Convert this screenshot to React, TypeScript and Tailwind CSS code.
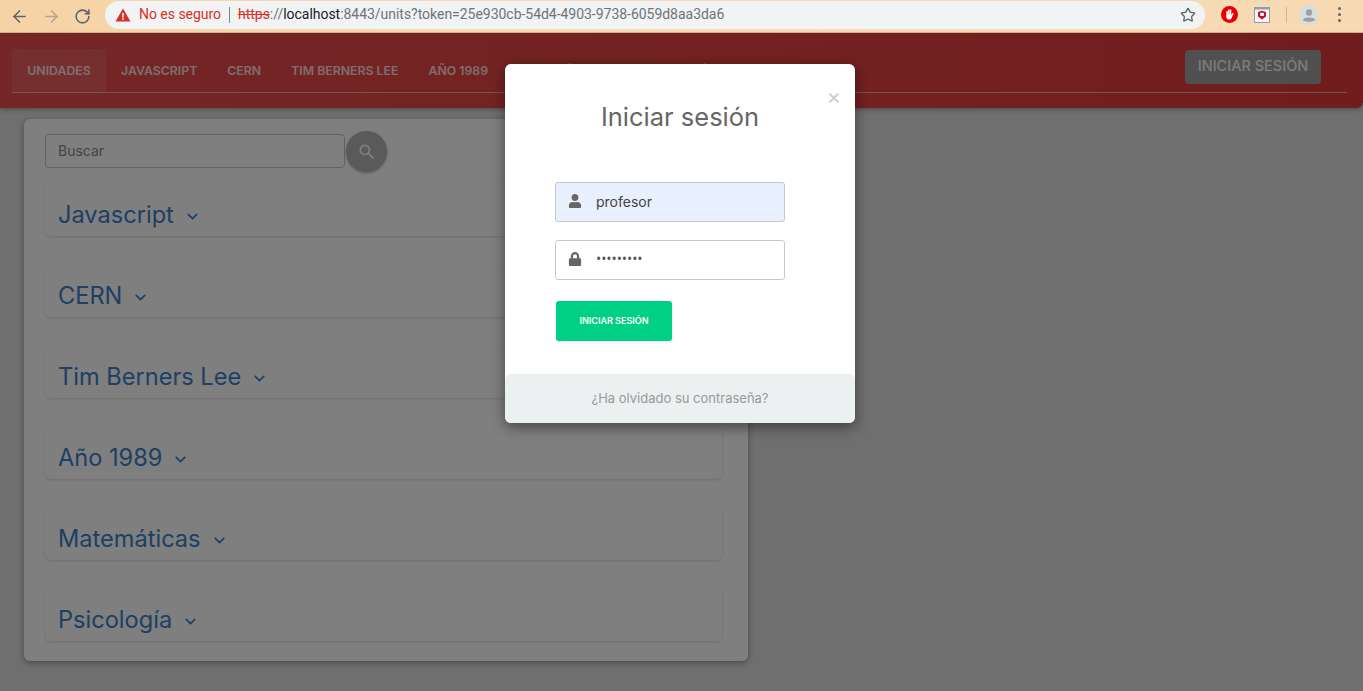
import { ArrowLeft, ArrowRight, RotateCw, Star, ChevronDown } from "lucide-react";
import { FaUser, FaLock } from "react-icons/fa";

const navItems = ["JAVASCRIPT", "CERN", "TIM BERNERS LEE", "AÑO 1989", "MATEMÁTICAS", "PSICOLOGÍA"];
const units = ["Javascript", "CERN", "Tim Berners Lee", "Año 1989", "Matemáticas", "Psicología"];
const ui = "font-['Inter',sans-serif]";

function BrowserBar() {
  return (
    <div className="h-[33px] flex items-center bg-gradient-to-r from-[#f6d3a6] via-[#f9ddb9] to-[#f7d9b2] border-b border-[#d9b48a] font-['Roboto',sans-serif]">
      <div className="w-[105px] flex items-center pl-[10px] gap-[13px] shrink-0">
        <ArrowLeft size={19} strokeWidth={2} className="text-[#5f6368]" />
        <ArrowRight size={19} strokeWidth={2} className="text-[#b3a391]" />
        <RotateCw size={17} strokeWidth={2.2} className="text-[#5f6368]" />
      </div>
      <div className="w-[1100px] h-[28px] rounded-full bg-[#f1f3f4] flex items-center pl-[10px] pr-[9px] text-[14px] tracking-[-0.03px] shrink-0 mb-[3px]">
        <svg width="16" height="14" viewBox="0 0 16 14" className="shrink-0">
          <path d="M8 0.5 15.5 13.5H0.5Z" fill="#d93025" />
          <rect x="7.2" y="5" width="1.6" height="4.5" fill="#fff" />
          <rect x="7.2" y="10.3" width="1.6" height="1.6" fill="#fff" />
        </svg>
        <span className="ml-[8px] text-[#d93025]">No es seguro</span>
        <span className="mx-[8px] w-px h-[16px] bg-[#80868b]" />
        <span className="text-[#d93025] line-through">https</span>
        <span className="text-[#6f7377]">://</span>
        <span className="text-[#202124]">localhost</span>
        <span className="text-[#6f7377]">:8443/units?token=25e930cb-54d4-4903-9738-6059d8aa3da6</span>
        <Star size={16} strokeWidth={2} className="ml-auto text-[#5f6368]" />
      </div>
      <div className="flex-1 flex items-center pl-[16px] mb-[3px]">
        <svg width="17" height="17" viewBox="0 0 17 17" className="shrink-0">
          <circle cx="8.5" cy="8.5" r="8.5" fill="#e60000" />
          <rect x="5.4" y="5" width="1.5" height="6" rx="0.7" fill="#fff" />
          <rect x="7.1" y="3.2" width="1.5" height="7" rx="0.7" fill="#fff" />
          <rect x="8.8" y="3.6" width="1.5" height="7" rx="0.7" fill="#fff" />
          <path d="M5.400 8.500H10.300L11.700 7.100C12.300 6.700 12.900 7.200 12.500 7.800L10.500 12.200C10.100 13 9.500 13.500 8.700 13.500H7.500C6.300 13.500 5.400 12.500 5.400 11.300Z" fill="#fff" />
        </svg>
        <svg width="16" height="16" viewBox="0 0 16 16" className="ml-[16px] shrink-0">
          <rect x="0.500" y="0.500" width="15" height="15" fill="#f5f5f5" stroke="#8fa0ab" />
          <rect x="0" y="0" width="16" height="2.500" fill="#8fa0ab" />
          <path d="M4 5 8 3.800 12 5V9.500L8 12.500 4 9.500Z" fill="#c8102e" />
          <rect x="6.200" y="5.800" width="3.600" height="3.200" fill="#fff" />
        </svg>
        <span className="ml-[16px] w-px h-[16px] bg-[#c9b9a3]" />
        <svg width="20" height="20" viewBox="0 0 20 20" className="ml-[12px] shrink-0">
          <circle cx="10" cy="10" r="10" fill="#dcdcdc" />
          <circle cx="10" cy="7.500" r="3.200" fill="#9aa0a6" />
          <path d="M3.800 15C5 11.800 15 11.800 16.200 15 13.500 17.300 6.500 17.300 3.800 15Z" fill="#9aa0a6" />
        </svg>
        <span className="ml-[19px] flex flex-col gap-[3px]">
          <span className="w-[3px] h-[3px] rounded-full bg-[#5f6368]" />
          <span className="w-[3px] h-[3px] rounded-full bg-[#5f6368]" />
          <span className="w-[3px] h-[3px] rounded-full bg-[#5f6368]" />
        </span>
      </div>
    </div>
  );
}

function NavBar() {
  return (
    <div className="h-[75px] bg-gradient-to-r from-[#ea4c4c] to-[#e43a3a] rounded-br-[6px] px-[12px] pt-[16px] shadow-[0_2px_4px_rgba(0,0,0,0.25)] relative">
      <div className="h-[44px] mr-[4px] border-b border-[#f0f0f0]/60 flex justify-between">
        <div className="flex">
          <div className="h-[43px] w-[94px] flex items-center justify-center pt-[1px] bg-white/10 rounded-t-[3px] text-[12.3px] font-semibold text-white/80">UNIDADES</div>
          {navItems.map((n) => (
            <div key={n} className="h-[43px] flex items-center pt-[1px] px-[15px] text-[12.3px] font-semibold text-white/80">{n}</div>
          ))}
        </div>
        <div className="h-[34px] w-[136px] mr-[26px] mt-[1px] pb-[3px] rounded-[4px] bg-[#a0a0a0] flex items-center justify-center text-[14.5px] font-medium text-[#f6f6f6]">INICIAR SESIÓN</div>
      </div>
    </div>
  );
}

function UnitCard() {
  return (
    <div className="w-[724px] h-[542px] ml-[24px] mt-[11px] rounded-[6px] bg-white shadow-[0_2px_6px_rgba(0,0,0,0.35)] pl-[21px] pr-[26px] pt-[15px]">
      <div className="flex items-center h-[34px]">
        <div className="w-[300px] h-[34px] rounded-[4px] border border-[#c4c4c4] flex items-center pl-[12px] pb-[2px] text-[14px] text-[#888]">Buscar</div>
        <div className="w-[41px] h-[41px] ml-px mt-[1px] rounded-full bg-[#b4b4b4] flex items-center justify-center shadow-[0_1px_3px_rgba(0,0,0,0.3)]">
          <svg width="20" height="20" viewBox="0 0 24 24" fill="#fff">
            <path d="M15.500 14h-.790l-.280-.270A6.470 6.470 0 0 0 16 9.500 6.500 6.500 0 1 0 9.500 16c1.610 0 3.090-.590 4.230-1.570l.270.280v.790l5 4.990L20.490 19l-4.990-5zm-6 0C7.010 14 5 11.990 5 9.500S7.010 5 9.500 5 14 7.010 14 9.500 11.990 14 9.500 14z" />
          </svg>
        </div>
      </div>
      <div className="mt-[16px] flex flex-col gap-[29px]">
        {units.map((u) => (
          <div key={u} className="h-[52px] rounded-[6px] bg-[#fefefe] shadow-[0_1px_3px_rgba(0,0,0,0.14)] flex items-center pl-[13px] pt-[10px]">
            <span className="text-[23.6px] leading-none text-[#3a80c8]">{u}</span>
            <ChevronDown size={17} strokeWidth={2.4} className="ml-[10px] mt-[3px] text-[#3a80c8]" />
          </div>
        ))}
      </div>
    </div>
  );
}

function LoginModal() {
  return (
    <div className="absolute left-[505px] top-[31px] w-[350px] h-[359px] rounded-[6px] bg-white shadow-[0_4px_14px_rgba(0,0,0,0.45)] flex flex-col">
      <div className="relative h-[118px] flex justify-center pt-[35px]">
        <span className="text-[25.5px] leading-[36px] text-[#666]">Iniciar sesión</span>
        <span className="absolute right-[14px] top-[19px] text-[22px] leading-[26px] text-[#ccc]">×</span>
      </div>
      <div className="pl-[50px] flex flex-col flex-1">
        <div className="w-[230px] h-[40px] rounded-[3px] border border-[#c8c8c8] bg-[#e8f0fe] flex items-center pl-[12px] text-[14px] text-[#444]">
          <FaUser size={14} className="text-[#666] -mt-[2px]" />
          <span className="ml-[14px] -mt-[1px]">profesor</span>
        </div>
        <div className="w-[230px] h-[40px] mt-[18px] rounded-[3px] border border-[#c8c8c8] bg-white flex items-center pl-[12px] text-[#555]">
          <FaLock size={14} className="text-[#666] -mt-[2px]" />
          <span className="ml-[14px] -mt-[2px] font-['Open_Sans',sans-serif] text-[14px] tracking-[-0.1px] leading-none">•••••••••</span>
        </div>
        <div className="w-[116px] h-[40px] ml-px mt-[21px] rounded-[3px] bg-[#00d084] flex items-center justify-center text-[9px] font-semibold text-white shadow-[0_1px_3px_rgba(180,80,220,0.25)]">INICIAR SESIÓN</div>
      </div>
      <div className="h-[49px] rounded-[6px] bg-[#ecf0f1] flex items-center justify-center text-[13px] text-[#999]">¿Ha olvidado su contraseña?</div>
    </div>
  );
}

export default function App() {
  return (
    <div className={`w-[1363px] h-[691px] overflow-hidden flex flex-col ${ui}`}>
      <BrowserBar />
      <div className="relative flex-1 bg-[#dedede]">
        <NavBar />
        <UnitCard />
        <div className="absolute inset-0 bg-black/50" />
        <LoginModal />
      </div>
    </div>
  );
}
